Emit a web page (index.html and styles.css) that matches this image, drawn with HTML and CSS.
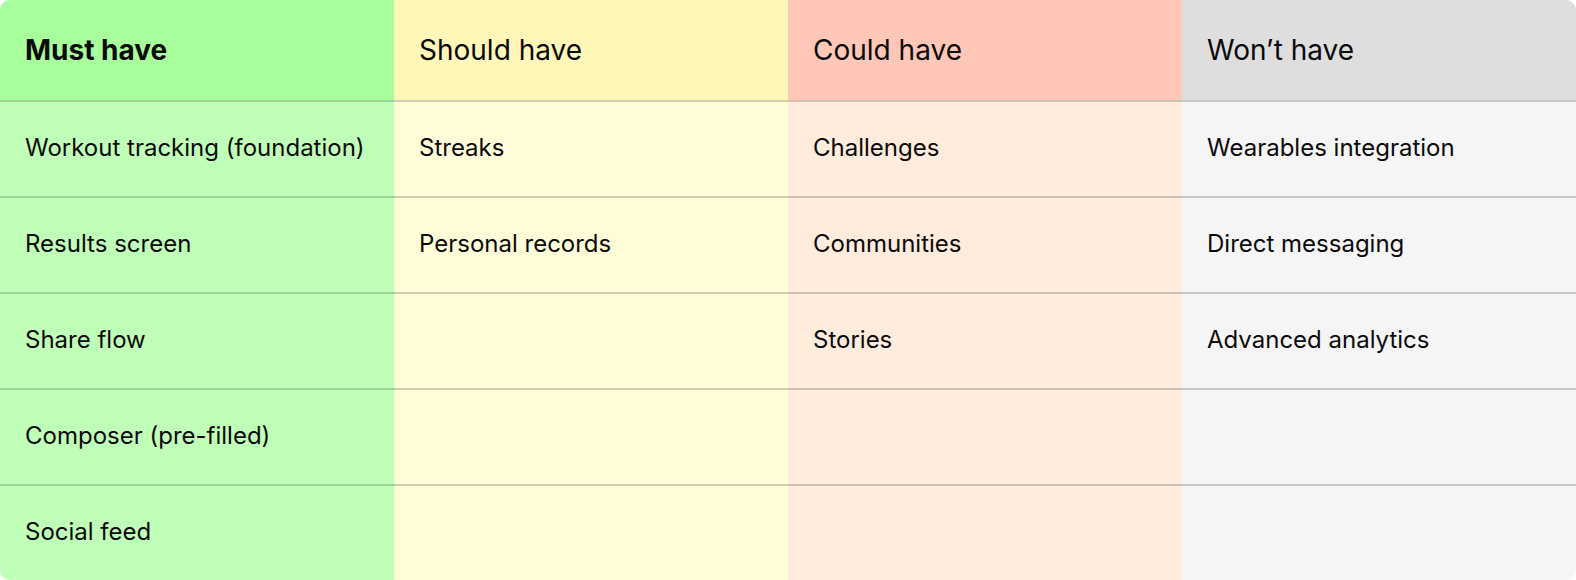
FILE: index.html
```html
<!DOCTYPE html>
<html lang="en">
<head>
<meta charset="utf-8">
<title>MoSCoW</title>
<link rel="stylesheet" href="styles.css">
</head>
<body>
<div class="board">
  <div class="cell head must"><b>Must have</b></div>
  <div class="cell head should">Should have</div>
  <div class="cell head could">Could have</div>
  <div class="cell head wont">Won’t have</div>

  <div class="cell must">Workout tracking (foundation)</div>
  <div class="cell should">Streaks</div>
  <div class="cell could">Challenges</div>
  <div class="cell wont">Wearables integration</div>

  <div class="cell must">Results screen</div>
  <div class="cell should">Personal records</div>
  <div class="cell could">Communities</div>
  <div class="cell wont">Direct messaging</div>

  <div class="cell must">Share flow</div>
  <div class="cell should"></div>
  <div class="cell could">Stories</div>
  <div class="cell wont">Advanced analytics</div>

  <div class="cell must">Composer (pre-filled)</div>
  <div class="cell should"></div>
  <div class="cell could"></div>
  <div class="cell wont"></div>

  <div class="cell must">Social feed</div>
  <div class="cell should"></div>
  <div class="cell could"></div>
  <div class="cell wont"></div>
</div>
</body>
</html>
```
FILE: styles.css
```css
html, body {
  margin: 0;
  padding: 0;
  background: #ffffff;
}
body {
  font-family: Inter, "Noto Sans", sans-serif;
  color: #0a0a0a;
}
.board {
  width: 1576px;
  height: 580px;
  display: grid;
  grid-template-columns: repeat(4, 1fr);
  grid-template-rows: 100px repeat(5, 96px);
  border-radius: 10px;
  overflow: hidden;
}
.cell {
  display: flex;
  align-items: center;
  padding: 0 25px 3px;
  font-size: 24px;
  border-top: 2px solid rgba(0, 0, 0, 0.18);
}
.cell.head {
  font-size: 28px;
  padding-bottom: 0;
  border-top: none;
}
.cell.head b {
  font-weight: 700;
}
.must { background: #c0ffb8; }
.should { background: #fffdd8; }
.could { background: #ffecdc; }
.wont { background: #f5f5f5; }
.head.must { background: #a6ff9a; }
.head.should { background: #fff7b8; }
.head.could { background: #ffc7b7; }
.head.wont { background: #dedede; }
```
